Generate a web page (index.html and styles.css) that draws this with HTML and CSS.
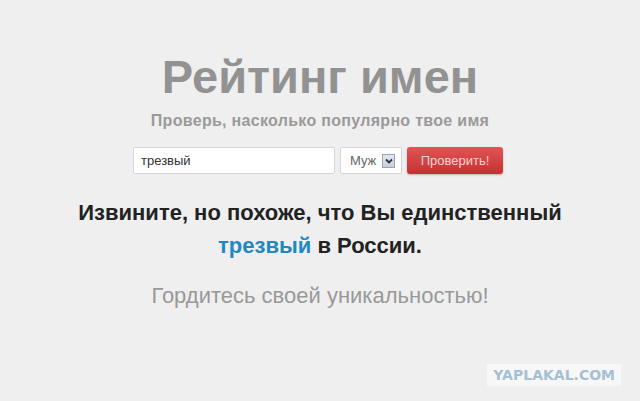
FILE: index.html
```html
<!DOCTYPE html>
<html lang="ru">

<head>
    <meta charset="UTF-8">
    <meta name="viewport" content="width=device-width, initial-scale=1.0">
    <title>Рейтинг имен</title>
    <link rel="stylesheet" href="styles.css">
</head>

<body>
    <div class="page">
        <h1 class="title">Рейтинг имен</h1>
        <p class="subtitle">Проверь, насколько популярно твое имя</p>

        <form class="search">
            <div class="name-input">трезвый</div>
            <div class="gender-select">
                <span>Муж</span>
                <span class="arrow">
                    <svg width="8" height="6" viewBox="0 0 8 6">
                        <path d="M1 1.5 L4 4.5 L7 1.5" fill="none" stroke="#333" stroke-width="1.8" />
                    </svg>
                </span>
            </div>
            <div class="check-btn">Проверить!</div>
        </form>

        <div class="result">
            <p class="result-text">Извините, но похоже, что Вы единственный<br>
                <span class="name">трезвый</span> в России.</p>
            <p class="proud">Гордитесь своей уникальностью!</p>
        </div>
    </div>

    <div class="watermark">YAPLAKAL.COM</div>
</body>

</html>
```

FILE: styles.css
```css
html,
body {
    margin: 0;
    height: 100%;
}

body {
    font-family: "Liberation Sans", Arial, sans-serif;
    background: #efefef;
    position: relative;
    overflow: hidden;
}

.page {
    display: flex;
    flex-direction: column;
    align-items: center;
    padding-top: 47px;
}

.title {
    margin: 0;
    font-size: 47px;
    line-height: 60px;
    font-weight: bold;
    color: #929292;
}

.subtitle {
    margin: 4px 0 0;
    font-size: 16px;
    line-height: 20px;
    font-weight: bold;
    letter-spacing: 0.3px;
    color: #9a9a9a;
}

.search {
    display: flex;
    gap: 5px;
    margin: 16px 4px 0 0;
    height: 27px;
}

.name-input {
    width: 193px;
    height: 25px;
    border: 1px solid #d6d6d6;
    border-radius: 2px;
    background: #fff;
    font-size: 13px;
    line-height: 25px;
    padding-left: 7px;
    color: #333;
}

.gender-select {
    width: 51px;
    height: 25px;
    border: 1px solid #d6d6d6;
    border-radius: 2px;
    background: #fff;
    display: flex;
    align-items: center;
    gap: 6px;
    padding-left: 9px;
    font-size: 13px;
    color: #666;
}

.arrow {
    width: 11px;
    height: 12px;
    border: 1px solid #9aa3b5;
    background: linear-gradient(#e2e6ee, #c9cfdb);
    display: flex;
    align-items: center;
    justify-content: center;
}

.check-btn {
    width: 96px;
    height: 27px;
    border-radius: 3px;
    background: linear-gradient(#e25454, #c53131);
    box-shadow: 0 1px 2px rgba(0, 0, 0, 0.25);
    color: #fbd3d3;
    font-size: 13px;
    line-height: 27px;
    text-align: center;
}

.result {
    text-align: center;
    margin-top: 22px;
}

.result-text {
    margin: 0;
    font-size: 22px;
    line-height: 33px;
    font-weight: bold;
    color: #222;
}

.name {
    color: #1f8ac0;
}

.proud {
    margin: 21px 0 0;
    font-size: 22px;
    line-height: 26px;
    color: #999;
}

.watermark {
    position: absolute;
    right: 19px;
    bottom: 15px;
    padding: 3px 6px;
    background: #f7f7f7;
    font-family: "DejaVu Sans", sans-serif;
    font-weight: bold;
    font-size: 14px;
    color: #a5bfd3;
}
```
